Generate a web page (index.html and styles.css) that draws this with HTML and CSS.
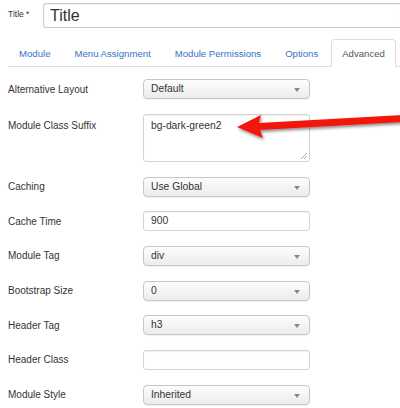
FILE: index.html
```html
<!DOCTYPE html>
<html>
<head>
<meta charset="utf-8">
<link rel="stylesheet" href="styles.css">
</head>
<body>
<div class="page">
  <div class="title-row">
    <label class="title-label">Title <span class="star">*</span></label>
    <div class="title-input">Title</div>
  </div>
  <ul class="tabs">
    <li><a>Module</a></li>
    <li><a>Menu Assignment</a></li>
    <li><a>Module Permissions</a></li>
    <li><a>Options</a></li>
    <li class="active"><a>Advanced</a></li>
  </ul>
  <div class="form">
    <div class="row"><div class="lbl">Alternative Layout</div><div class="select">Default<span class="caret"></span></div></div>
    <div class="row tall"><div class="lbl">Module Class Suffix</div><div class="textarea">bg-dark-green2<svg class="grip" width="8" height="8" viewBox="0 0 8 8"><path d="M7 1L1 7M7 4L4 7" stroke="#aaa" stroke-width="1"/></svg></div></div>
    <div class="row"><div class="lbl">Caching</div><div class="select">Use Global<span class="caret"></span></div></div>
    <div class="row"><div class="lbl">Cache Time</div><div class="input">900</div></div>
    <div class="row"><div class="lbl">Module Tag</div><div class="select">div<span class="caret"></span></div></div>
    <div class="row"><div class="lbl">Bootstrap Size</div><div class="select">0<span class="caret"></span></div></div>
    <div class="row"><div class="lbl">Header Tag</div><div class="select">h3<span class="caret"></span></div></div>
    <div class="row"><div class="lbl">Header Class</div><div class="input"></div></div>
    <div class="row"><div class="lbl">Module Style</div><div class="select">Inherited<span class="caret"></span></div></div>
  </div>
  <svg class="arrow" width="165" height="40" viewBox="0 0 165 40">
    <defs>
      <filter id="sh" x="-10%" y="-30%" width="130%" height="180%">
        <feDropShadow dx="1" dy="2" stdDeviation="1.5" flood-color="#000" flood-opacity="0.45"/>
      </filter>
    </defs>
    <polygon filter="url(#sh)" fill="#f2190f" points="2,22 26,10 24,18 168,10 168,17 25,25 28,33"/>
  </svg>
</div>
</body>
</html>
```
FILE: styles.css
```css
html, body {
  margin: 0;
  padding: 0;
  background: #fff;
}
body {
  font-family: "Liberation Sans", Arial, sans-serif;
  color: #333;
  width: 400px;
  height: 408px;
  overflow: hidden;
}
.page {
  position: relative;
  padding: 3px 0 0 8px;
}
.title-row {
  display: flex;
  align-items: center;
  height: 25px;
}
.title-label {
  flex-shrink: 0;
  white-space: nowrap;
  font-size: 8.5px;
  width: 35px;
  color: #333;
  margin-top: -4px;
}
.title-input {
  box-sizing: border-box;
  flex: 1;
  height: 25px;
  border: 1px solid #ccc;
  border-right: 0;
  border-radius: 3px 0 0 3px;
  box-shadow: inset 0 1px 1px rgba(0,0,0,0.06);
  font-size: 16px;
  line-height: 23px;
  padding-left: 6px;
  color: #333;
}
.tabs {
  list-style: none;
  margin: 11px 0 0 0;
  padding: 0;
  display: flex;
  border-bottom: 1px solid #ddd;
  height: 27px;
}
.tabs li {
  flex-shrink: 0;
  margin-right: 2px;
  margin-bottom: -1px;
  white-space: nowrap;
}
.tabs a {
  display: block;
  box-sizing: border-box;
  height: 28px;
  padding: 0 10px;
  font-size: 9.6px;
  line-height: 27px;
  color: #3473c6;
  border: 1px solid transparent;
  border-bottom: 0;
  border-radius: 4px 4px 0 0;
}
.tabs li.active a {
  color: #555;
  background: #fff;
  border-color: #ddd;
}
.form {
  padding-top: 12px;
}
.row {
  display: flex;
  align-items: center;
  height: 20px;
  margin-bottom: 14.67px;
}
.row.tall {
  height: 48px;
  align-items: flex-start;
  margin-bottom: 15px;
}
.row.tall .lbl {
  padding-top: 6px;
}
.lbl {
  width: 135px;
  flex-shrink: 0;
  font-size: 10px;
  color: #333;
}
.select, .input, .textarea {
  box-sizing: border-box;
  width: 167px;
  font-size: 10.3px;
  color: #333;
  position: relative;
}
.select {
  height: 20px;
  line-height: 18px;
  padding-left: 7px;
  border: 1px solid #c6c6c6;
  border-radius: 4px;
  background: linear-gradient(#fdfdfd, #ececec);
  box-shadow: 0 1px 1px rgba(0,0,0,0.05);
}
.caret {
  position: absolute;
  right: 9px;
  top: 8px;
  width: 0;
  height: 0;
  border-left: 3px solid transparent;
  border-right: 3px solid transparent;
  border-top: 4px solid #888;
}
.input {
  height: 20px;
  line-height: 18px;
  padding-left: 7px;
  border: 1px solid #d3d3d3;
  border-radius: 3px;
  background: #fff;
  box-shadow: inset 0 1px 1px rgba(0,0,0,0.06);
}
.textarea {
  height: 48px;
  padding: 5px 0 0 7px;
  border: 1px solid #d3d3d3;
  border-radius: 3px;
  background: #fff;
  box-shadow: inset 0 1px 1px rgba(0,0,0,0.06);
}
.grip {
  position: absolute;
  right: 1px;
  bottom: 1px;
}
.arrow {
  position: absolute;
  left: 235px;
  top: 105px;
}
```
